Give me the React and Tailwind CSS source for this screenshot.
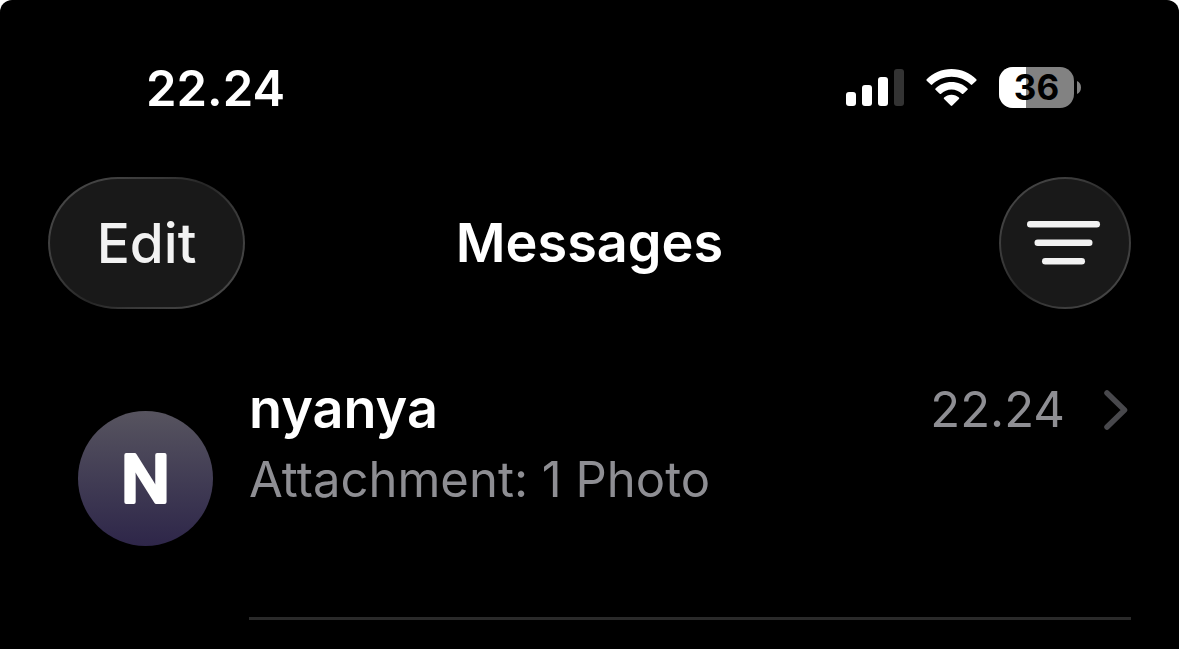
import React from 'react';

const chats = [
  { id: 1, name: 'nyanya', initial: 'N', preview: 'Attachment: 1 Photo', time: '22.24' },
];

const glass =
  'border-2 border-transparent [background:linear-gradient(#191919,#191919)_padding-box,linear-gradient(135deg,#4c4c4c,#383838_35%,#262626_50%,#383838_65%,#4c4c4c)_border-box]';

const SignalIcon = () => (
  <svg width="58" height="38" viewBox="0 0 58 38" fill="#fff" aria-hidden="true">
    <rect x="0" y="23" width="10" height="14" rx="3" />
    <rect x="16" y="16" width="10" height="21" rx="3" />
    <rect x="32" y="8" width="10" height="29" rx="3" />
    <rect x="48" y="0" width="10" height="37" rx="3" fill="#333" />
  </svg>
);

const WifiIcon = () => (
  <svg width="51" height="38" viewBox="0 0 51 38" fill="#fff" aria-hidden="true">
    <path d="M25.5 0C35.2 0 44 3.8 50.3 10.2Q51 11 50.3 11.7L46.2 15.6Q45.5 16.2 44.8 15.6C39.8 10.7 33 7.8 25.5 7.8S11.2 10.7 6.2 15.6Q5.5 16.2 4.8 15.6L.7 11.7Q0 11 .7 10.2C7 3.8 15.8 0 25.5 0Z" />
    <path d="M25.5 13C31.7 13 37.3 15.4 41.5 19.4Q42.2 20.1 41.5 20.8L37.3 24.8Q36.6 25.4 35.9 24.8C33.2 22.3 29.5 20.6 25.5 20.6S17.8 22.3 15.1 24.8Q14.4 25.4 13.7 24.8L9.5 20.8Q8.8 20.1 9.5 19.4C13.7 15.4 19.3 13 25.5 13Z" />
    <path d="M25.5 25.7C28.5 25.7 31 26.8 32.9 28.5Q33.7 29.2 32.9 30L26.3 36.5Q25.5 37.3 24.7 36.5L18.1 30Q17.3 29.2 18.1 28.5C20 26.8 22.5 25.7 25.5 25.7Z" />
  </svg>
);

const Battery = ({ level }) => (
  <div className="flex items-center gap-[3px]">
    <div className="relative flex h-[41px] w-[75px] items-center justify-center overflow-hidden rounded-[14px] bg-[#828282]">
      <div className="absolute inset-y-0 left-0 bg-white" style={{ width: `${level}%` }} />
      <span className="relative text-[35px] font-bold leading-none text-black">{level}</span>
    </div>
    <svg width="4" height="13" viewBox="0 0 4 13" fill="#828282" aria-hidden="true">
      <path d="M0 0C2.5 1 4 3.5 4 6.5S2.5 12 0 13Z" />
    </svg>
  </div>
);

const StatusBar = () => (
  <div className="flex items-start justify-between pt-[67px] pr-[98px] pl-[146px] text-white">
    <span className="text-[49px] leading-[44px] font-semibold">22.24</span>
    <div className="flex items-center gap-[22px]">
      <SignalIcon />
      <WifiIcon />
      <Battery level={36} />
    </div>
  </div>
);

const Header = () => (
  <header className="mt-[66px] grid grid-cols-[1fr_auto_1fr] items-center px-12">
    <button
      type="button"
      className={`${glass} h-[132px] w-[197px] justify-self-start rounded-[70px/66px] text-[55px] leading-none font-medium text-[#f2f2f2]`}
    >
      Edit
    </button>
    <h1 className="text-[54px] leading-none font-semibold text-white">Messages</h1>
    <button
      type="button"
      aria-label="Filter messages"
      className={`${glass} flex size-[132px] items-center justify-center justify-self-end rounded-full`}
    >
      <svg width="76" height="44" viewBox="0 0 76 44" fill="#f2f2f2" aria-hidden="true">
        <rect x="0" y="0" width="73" height="6.5" rx="3.25" />
        <rect x="7.5" y="18.5" width="58" height="6.5" rx="3.25" />
        <rect x="15" y="37" width="43" height="6.5" rx="3.25" />
      </svg>
    </button>
  </header>
);

// the outline softens the corners of the initial
const Avatar = ({ initial }) => (
  <div className="mt-[34px] size-[135px] shrink-0 rounded-full bg-linear-to-b from-[#57545f] to-[#2e2649]">
    <svg className="size-full" viewBox="0 0 135 135">
      <text
        x="67.5"
        y="91"
        textAnchor="middle"
        fill="#fff"
        stroke="#fff"
        strokeWidth="4"
        strokeLinejoin="round"
        className="text-[64px] font-medium"
      >
        {initial}
      </text>
    </svg>
  </div>
);

const ChatRow = ({ chat }) => (
  <li>
    <a href="#chat" className="flex pr-12 pl-[78px]">
      <Avatar initial={chat.initial} />
      <div className="ml-9 flex h-[243px] grow flex-col border-b-3 border-[#2a2a2a]">
        <div className="flex items-center justify-between">
          <span className="pb-0.5 text-[54px] leading-[64px] font-semibold text-white">{chat.name}</span>
          <div className="flex items-center gap-9 text-[#8e8e93]">
            <span className="text-[49px] leading-[66px]">{chat.time}</span>
            <svg width="30" height="42" viewBox="0 0 30 42" fill="none" stroke="#48484c" strokeWidth="5.5" strokeLinecap="round" strokeLinejoin="round" aria-hidden="true">
              <path d="M6 4L23.5 21L6 38" />
            </svg>
          </div>
        </div>
        <p className="mt-1 text-[49px] leading-[66px] text-[#8e8e93]">{chat.preview}</p>
      </div>
    </a>
  </li>
);

const App = () => {
  return (
    <div className="bg-white">
      <main className="min-h-screen rounded-t-xl bg-black font-['Inter',sans-serif]">
        <StatusBar />
        <Header />
        <ul className="mt-[68px]">
          {chats.map((chat) => (
            <ChatRow key={chat.id} chat={chat} />
          ))}
        </ul>
      </main>
    </div>
  );
};

export default App;
